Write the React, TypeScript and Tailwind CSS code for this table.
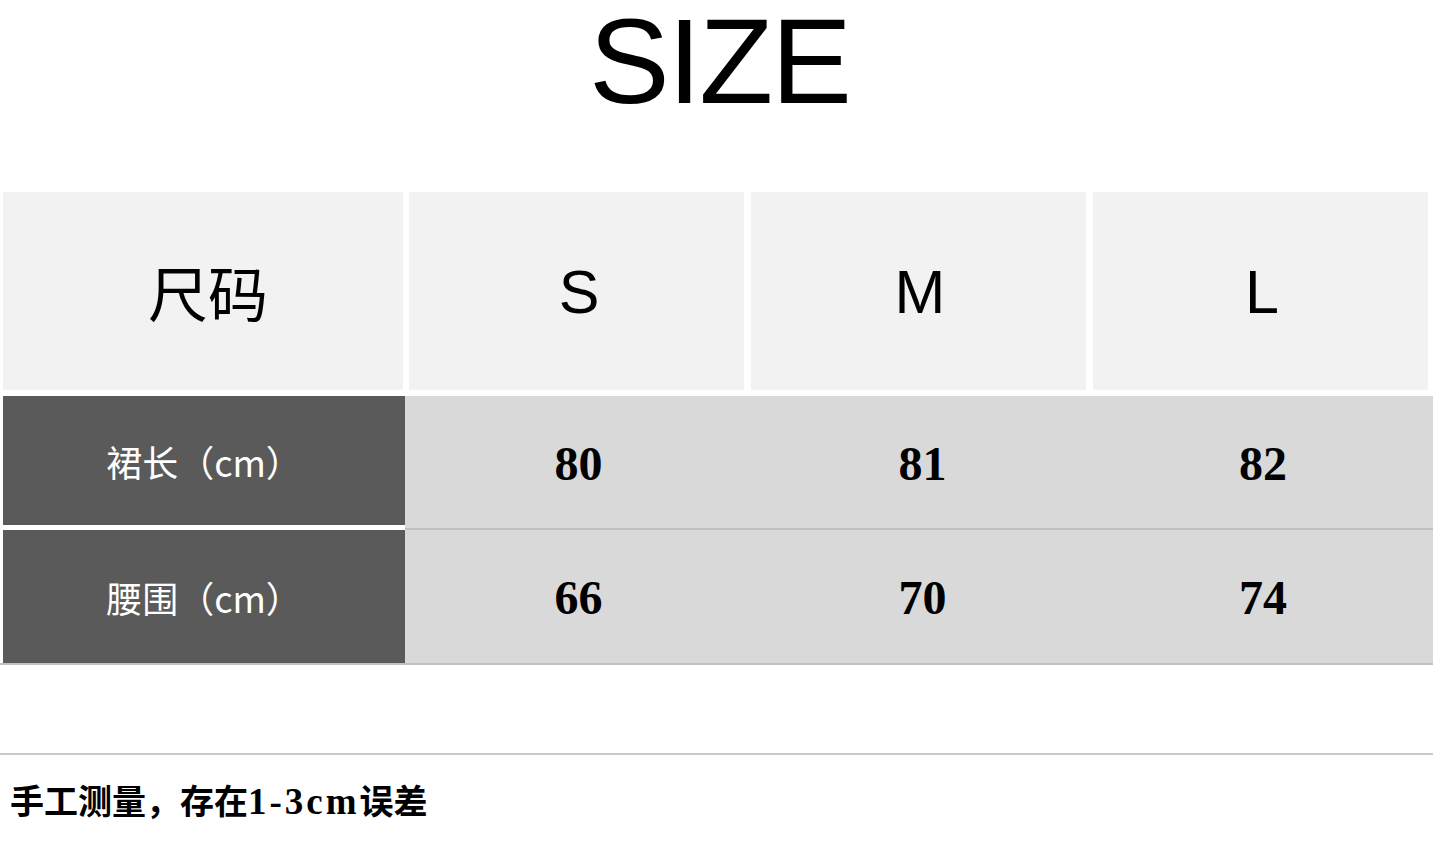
import React from "react";

const sans = { fontFamily: '"Liberation Sans", "Noto Sans CJK SC", sans-serif' };

export default function App() {
  const rows = [
    { label: "裙长（cm）", vals: ["80", "81", "82"] },
    { label: "腰围（cm）", vals: ["66", "70", "74"] },
  ];
  return (
    <div className="w-[1433px] h-[845px] bg-white overflow-hidden">
      <div className="h-[192px] flex justify-center pt-[1px]">
        <div className="text-[121px] leading-none text-black ml-[6px] tracking-[-2px]" style={sans}>
          SIZE
        </div>
      </div>

      <div className="h-[198px] flex pl-[3px]">
        <div className="w-[400px] bg-[#f2f2f2] flex items-center justify-center pl-[10px] text-[60px] text-black font-['Noto_Sans_CJK_SC',sans-serif]">
          尺码
        </div>
        <div className="w-[335px] ml-[6px] bg-[#f2f2f2] flex items-center justify-center pl-[5px] pt-[4px] text-[61px] text-black" style={sans}>
          S
        </div>
        <div className="w-[335px] ml-[7px] bg-[#f2f2f2] flex items-center justify-center pl-[3px] pt-[4px] text-[61px] text-black" style={sans}>
          M
        </div>
        <div className="w-[335px] ml-[7px] bg-[#f2f2f2] flex items-center justify-center pl-[3px] pt-[4px] text-[61px] text-black" style={sans}>
          L
        </div>
      </div>

      <div className="h-[6px]" />

      {rows.map((r, i) => (
        <div
          key={r.label}
          className={
            i === 0
              ? "h-[134px] flex"
              : "h-[135px] flex border-b-2 border-[#c0c0c0]"
          }
        >
          <div className="w-[3px]" />
          <div className="w-[402px] flex flex-col">
            <div
              className={
                i === 0
                  ? "h-[129px] bg-[#5a5a5a] flex items-center justify-center text-white text-[36px] font-['Noto_Sans_CJK_SC',sans-serif]"
                  : "flex-1 bg-[#5a5a5a] flex items-center justify-center text-white text-[36px] font-['Noto_Sans_CJK_SC',sans-serif]"
              }
            >
              {r.label}
            </div>
            {i === 0 && <div className="h-[5px] bg-white" />}
          </div>
          <div
            className={
              i === 0
                ? "flex-1 flex bg-[#d9d9d9] border-b-2 border-[#c0c0c0]"
                : "flex-1 flex bg-[#d9d9d9]"
            }
          >
            {r.vals.map((v, j) => (
              <div
                key={v}
                className={
                  (j === 0 ? "w-[347px]" : j === 1 ? "w-[341px]" : "flex-1") +
                  " flex items-center justify-center pt-[3px] text-[48px] font-bold text-black font-['Liberation_Serif',serif]"
                }
              >
                {v}
              </div>
            ))}
          </div>
        </div>
      ))}

      <div className="h-[88px]" />
      <div className="h-[2px] bg-[#c8c8c8]" />
      <div
        className="pl-[10px] pt-[28px] text-[34px] leading-none font-bold text-black"
        style={{ fontFamily: '"Liberation Serif", "Noto Sans CJK SC", serif' }}
      >
        手工测量，存在<span className="tracking-[3px] text-[37px]">1-3cm</span>误差
      </div>
    </div>
  );
}
